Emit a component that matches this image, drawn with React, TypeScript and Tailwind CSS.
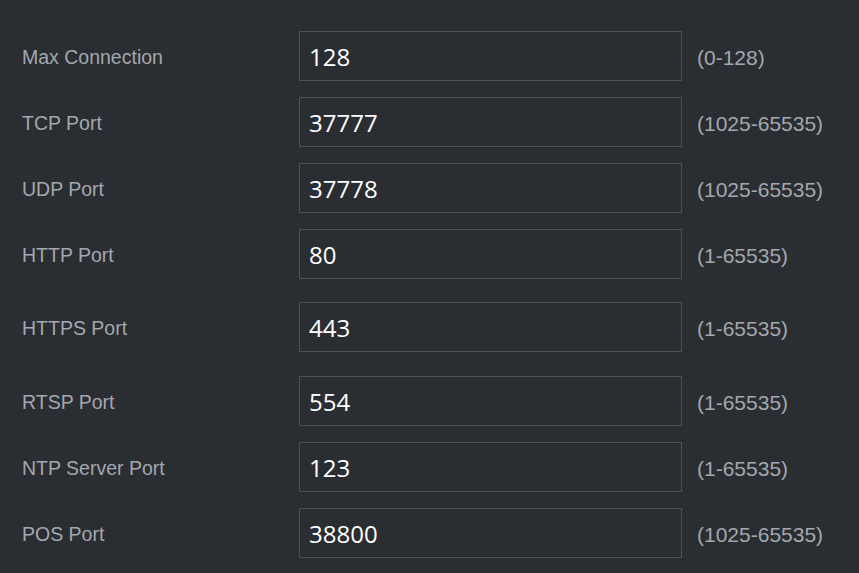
const rows = [
  { label: 'Max Connection', value: '128', hint: '(0-128)', gap: 'mt-[31px]' },
  { label: 'TCP Port', value: '37777', hint: '(1025-65535)', gap: 'mt-4' },
  { label: 'UDP Port', value: '37778', hint: '(1025-65535)', gap: 'mt-4' },
  { label: 'HTTP Port', value: '80', hint: '(1-65535)', gap: 'mt-4' },
  { label: 'HTTPS Port', value: '443', hint: '(1-65535)', gap: 'mt-[23px]' },
  { label: 'RTSP Port', value: '554', hint: '(1-65535)', gap: 'mt-6' },
  { label: 'NTP Server Port', value: '123', hint: '(1-65535)', gap: 'mt-4' },
  { label: 'POS Port', value: '38800', hint: '(1025-65535)', gap: 'mt-4' },
]

export default function App() {
  return (
    <div className="h-[573px] w-[859px] overflow-hidden bg-[#2a2d32] font-['Liberation_Sans',Arial,sans-serif]">
      {rows.map((r) => (
        <div key={r.label} className={`flex h-[50px] items-center ${r.gap}`}>
          <div className="w-[299px] pl-[22px] pt-[4px] text-[19.5px] text-[#a3a7ae]">{r.label}</div>
          <input
            defaultValue={r.value}
            className="h-[50px] w-[383px] border border-[#4b4f58] bg-transparent pl-[9px] font-['Open_Sans','Noto_Sans',sans-serif] text-[24px] text-white outline-none"
          />
          <div className="pl-[15px] pt-[3px] text-[21px] text-[#a3a7ae]">{r.hint}</div>
        </div>
      ))}
    </div>
  )
}
